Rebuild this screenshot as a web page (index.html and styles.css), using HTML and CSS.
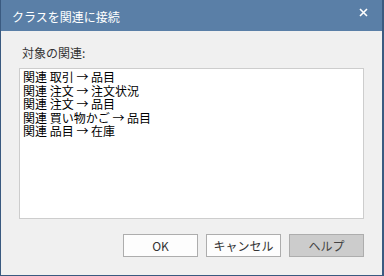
FILE: index.html
```html
<!DOCTYPE html>
<html lang="ja">
<head>
<meta charset="utf-8">
<title>クラスを関連に接続</title>
<link rel="stylesheet" href="styles.css">
</head>
<body>
<div class="window">
  <div class="titlebar">
    <span class="title">クラスを関連に接続</span>
    <svg class="close" width="9" height="9" viewBox="0 0 9 9"><path d="M1 1 L8 8 M8 1 L1 8" stroke="#fff" stroke-width="1.6" fill="none"/></svg>
  </div>
  <div class="content">
    <div class="label">対象の関連:</div>
    <div class="listbox">
      <div class="item">関連 取引 → 品目</div>
      <div class="item">関連 注文 → 注文状況</div>
      <div class="item">関連 注文 → 品目</div>
      <div class="item">関連 買い物かご → 品目</div>
      <div class="item">関連 品目 → 在庫</div>
    </div>
    <div class="buttons">
      <button class="btn">OK</button>
      <button class="btn">キャンセル</button>
      <button class="btn btn-disabled">ヘルプ</button>
    </div>
  </div>
</div>
</body>
</html>
```
FILE: styles.css
```css
* { box-sizing: border-box; }
html, body { margin: 0; padding: 0; }
body {
  font-family: "Noto Sans CJK JP", "Noto Sans", sans-serif;
  font-size: 12px;
  background: #f0f0f0;
}
.window {
  width: 384px;
  height: 276px;
  display: flex;
  flex-direction: column;
  background: #f0f0f0;
  border-left: 1px solid #3a5a80;
  border-right: 2px solid #3a5a80;
  border-bottom: 1px solid #3a5a80;
}
.titlebar {
  height: 31px;
  flex: none;
  background: #5a7fa7;
  display: flex;
  align-items: center;
  justify-content: space-between;
  padding: 0 14px 0 11px;
}
.title {
  color: #fff;
  font-size: 12px;
  line-height: 14px;
  margin-top: 3px;
}
.close {
  display: block;
  margin-top: -7px;
}
.content {
  flex: 1;
  display: flex;
  flex-direction: column;
  padding: 15px 17px 0 18px;
}
.label {
  color: #333;
  line-height: 14px;
  padding-left: 3px;
}
.listbox {
  margin-top: 8px;
  width: 345px;
  height: 151px;
  background: #fff;
  border: 1px solid #cdcdcd;
  padding: 1px 3px;
}
.item {
  color: #000;
  font-size: 12px;
  line-height: 13.5px;
  white-space: nowrap;
}
.buttons {
  margin-top: 15px;
  width: 345px;
  display: flex;
  justify-content: flex-end;
  gap: 8px;
}
.btn {
  width: 75px;
  height: 23px;
  padding: 0;
  font-family: inherit;
  font-size: 12px;
  color: #333;
  background: #fdfdfd;
  border: 1px solid #adadad;
  border-radius: 0;
}
.btn-disabled {
  background: #cccccc;
  color: #444;
}
```
